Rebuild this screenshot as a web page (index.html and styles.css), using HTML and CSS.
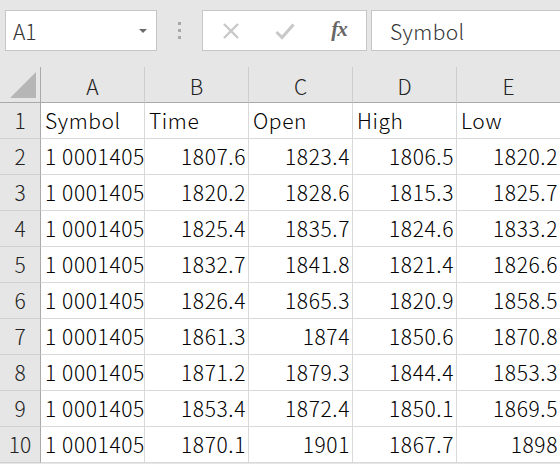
FILE: index.html
```html
<!DOCTYPE html>
<html lang="ja">

<head>
  <meta charset="UTF-8">
  <title>Book1 - Excel</title>
  <meta name="viewport" content="width=device-width, initial-scale=1">
  <link rel="stylesheet" href="styles.css">
</head>

<body>
  <div class="fbar">
    <div class="namebox">
      <span>A1</span>
      <svg class="caret" width="8" height="5" viewBox="0 0 8 5"><path d="M0 0h8L4 4z" fill="#6a6a6a"/></svg>
    </div>
    <div class="grip">
      <i></i><i></i><i></i>
    </div>
    <div class="fbtns">
      <span class="fb">
        <svg width="18" height="18" viewBox="0 0 18 18"><path d="M2 2L16 16M16 2L2 16" stroke="#c8c8c8" stroke-width="2.4" fill="none"/></svg>
      </span>
      <span class="fb">
        <svg width="20" height="18" viewBox="0 0 20 18"><path d="M1.5 10L7 15.5L18.5 2.5" stroke="#c8c8c8" stroke-width="3" fill="none"/></svg>
      </span>
      <span class="fb fx">fx</span>
    </div>
    <div class="formula">Symbol</div>
  </div>

  <div class="sheet">
    <div class="corner"><span class="tri"></span></div>
    <div class="ch">A</div>
    <div class="ch">B</div>
    <div class="ch">C</div>
    <div class="ch">D</div>
    <div class="ch">E</div>

    <div class="rh">1</div>
    <div class="c">Symbol</div>
    <div class="c">Time</div>
    <div class="c">Open</div>
    <div class="c">High</div>
    <div class="c">Low</div>

    <div class="rh">2</div>
    <div class="c">1 0001405</div>
    <div class="c n">1807.6</div>
    <div class="c n">1823.4</div>
    <div class="c n">1806.5</div>
    <div class="c n">1820.2</div>

    <div class="rh">3</div>
    <div class="c">1 0001405</div>
    <div class="c n">1820.2</div>
    <div class="c n">1828.6</div>
    <div class="c n">1815.3</div>
    <div class="c n">1825.7</div>

    <div class="rh">4</div>
    <div class="c">1 0001405</div>
    <div class="c n">1825.4</div>
    <div class="c n">1835.7</div>
    <div class="c n">1824.6</div>
    <div class="c n">1833.2</div>

    <div class="rh">5</div>
    <div class="c">1 0001405</div>
    <div class="c n">1832.7</div>
    <div class="c n">1841.8</div>
    <div class="c n">1821.4</div>
    <div class="c n">1826.6</div>

    <div class="rh">6</div>
    <div class="c">1 0001405</div>
    <div class="c n">1826.4</div>
    <div class="c n">1865.3</div>
    <div class="c n">1820.9</div>
    <div class="c n">1858.5</div>

    <div class="rh">7</div>
    <div class="c">1 0001405</div>
    <div class="c n">1861.3</div>
    <div class="c n">1874</div>
    <div class="c n">1850.6</div>
    <div class="c n">1870.8</div>

    <div class="rh">8</div>
    <div class="c">1 0001405</div>
    <div class="c n">1871.2</div>
    <div class="c n">1879.3</div>
    <div class="c n">1844.4</div>
    <div class="c n">1853.3</div>

    <div class="rh">9</div>
    <div class="c">1 0001405</div>
    <div class="c n">1853.4</div>
    <div class="c n">1872.4</div>
    <div class="c n">1850.1</div>
    <div class="c n">1869.5</div>

    <div class="rh">10</div>
    <div class="c">1 0001405</div>
    <div class="c n">1870.1</div>
    <div class="c n">1901</div>
    <div class="c n">1867.7</div>
    <div class="c n">1898</div>
  </div>
</body>

</html>
```

FILE: styles.css
```css
* {
  box-sizing: border-box;
}

html,
body {
  height: 100%;
}

body {
  margin: 0;
  overflow: hidden;
  background: #e6e6e6;
  color: #000;
  font-family: "Noto Sans CJK JP", "Noto Sans", sans-serif;
  font-weight: 300;
  font-size: 21px;
}

/* formula bar */

.fbar {
  display: flex;
  align-items: flex-start;
  height: 67px;
  padding: 10px 0 0 5px;
}

.namebox,
.fbtns,
.formula {
  height: 41px;
  background: #fff;
  border: 1px solid #c6c6c6;
}

.namebox {
  width: 152px;
  display: flex;
  align-items: center;
  justify-content: space-between;
  padding: 0 9px 0 7px;
  color: #333;
  font-size: 21px;
}

.caret {
  margin-top: 1px;
}

.grip {
  width: 45px;
  height: 41px;
  display: flex;
  flex-direction: column;
  align-items: center;
  justify-content: center;
  gap: 4px;
}

.grip i {
  width: 3px;
  height: 3px;
  background: #a8a8a8;
}

.fbtns {
  width: 165px;
  display: flex;
  align-items: center;
  padding-left: 1px;
}

.fb {
  width: 54px;
  display: flex;
  align-items: center;
  justify-content: center;
}

.fx {
  font-family: "Liberation Serif", serif;
  font-style: italic;
  font-weight: bold;
  font-size: 21px;
  color: #666;
  letter-spacing: -1px;
  padding-bottom: 2px;
}

.formula {
  flex: 1;
  margin-left: 4px;
  margin-right: -10px;
  padding-left: 18px;
  display: flex;
  align-items: center;
  color: #333;
  font-size: 21px;
  letter-spacing: 0.4px;
}

/* sheet */

.sheet {
  display: grid;
  grid-template-columns: 41px repeat(5, 104px);
  grid-auto-rows: 36px;
}

.corner,
.ch,
.rh {
  background: #e6e6e6;
  color: #222;
  display: flex;
  align-items: center;
  justify-content: center;
}

.corner {
  position: relative;
  border-right: 1px solid #a9a9a9;
  border-bottom: 1px solid #a9a9a9;
}

.tri {
  position: absolute;
  right: 4px;
  bottom: 4px;
  width: 0;
  height: 0;
  border-left: 26px solid transparent;
  border-bottom: 26px solid #b6b6b6;
}

.ch {
  border-right: 1px solid #cdcdcd;
  border-bottom: 1px solid #a9a9a9;
  padding-top: 2px;
}

.rh {
  border-right: 1px solid #a9a9a9;
  border-bottom: 1px solid #d0d0d0;
  padding-bottom: 1px;
}

.c {
  background: #fff;
  border-right: 1px solid #d9d9d9;
  border-bottom: 1px solid #d9d9d9;
  padding: 0 3px 1px 4px;
  display: flex;
  align-items: center;
  white-space: nowrap;
  letter-spacing: 0.6px;
}

.n {
  justify-content: flex-end;
  padding-right: 2px;
}
```
